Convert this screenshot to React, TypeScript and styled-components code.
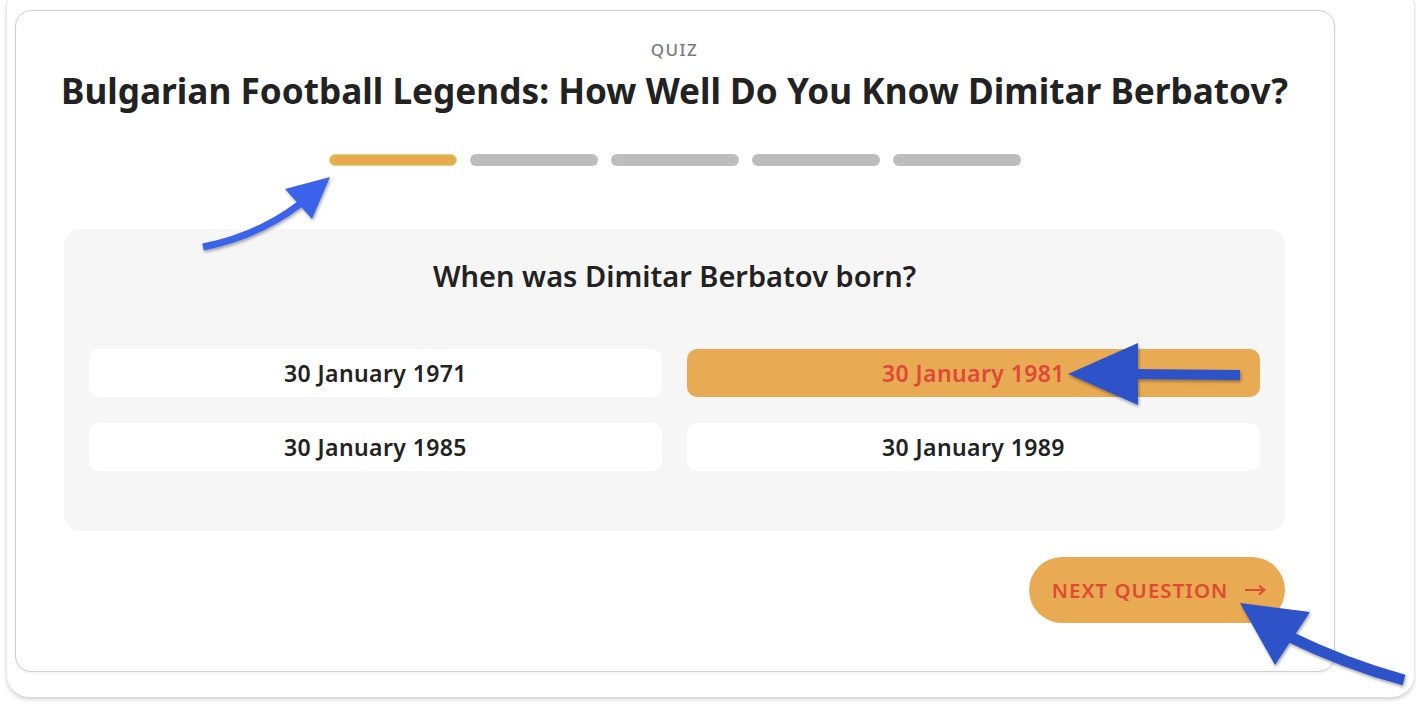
import React from 'react';
import styled, { createGlobalStyle } from 'styled-components';

const GlobalStyle = createGlobalStyle`
  html, body {
    margin: 0;
    padding: 0;
    background: #ffffff;
    overflow: hidden;
  }
  body {
    font-family: "Noto Sans", "Open Sans", sans-serif;
    color: #222222;
  }
`;

const options = [
  { label: '30 January 1971', selected: false },
  { label: '30 January 1981', selected: true },
  { label: '30 January 1985', selected: false },
  { label: '30 January 1989', selected: false },
];

const steps = [true, false, false, false, false];

function Annotations() {
  return (
    <Overlay width="1416" height="704" viewBox="0 0 1416 704">
      <defs>
        <filter id="shadow" x="-20%" y="-20%" width="140%" height="140%">
          <feDropShadow dx="1" dy="2" stdDeviation="1.5" floodColor="#000" floodOpacity="0.35" />
        </filter>
      </defs>
      <g filter="url(#shadow)">
        <path d="M203 247 Q258 236 300 204" fill="none" stroke="#3a62ea" strokeWidth="7" />
        <polygon points="330,177 285,189 312,219" fill="#3a62ea" />
      </g>
      <g filter="url(#shadow)">
        <path d="M1240 375 L1132 374" fill="none" stroke="#2f53c9" strokeWidth="10" />
        <polygon points="1068,374 1138,343 1138,405" fill="#2f53c9" />
      </g>
      <g filter="url(#shadow)">
        <path d="M1288 636 Q1345 664 1404 680" fill="none" stroke="#2f53c9" strokeWidth="11" />
        <polygon points="1240,603 1310,612 1275,665" fill="#2f53c9" />
      </g>
    </Overlay>
  );
}

function LongArrow() {
  return (
    <ArrowIcon width="22" height="12" viewBox="0 0 22 12">
      <path d="M1 6 H20" stroke="currentColor" strokeWidth="2" fill="none" />
      <path d="M15 1.5 L20.5 6 L15 10.5" stroke="currentColor" strokeWidth="2" fill="none" />
    </ArrowIcon>
  );
}

export default function App() {
  return (
    <>
      <GlobalStyle />
      <Page>
        <Backdrop>
          <Card>
            <Eyebrow>QUIZ</Eyebrow>
            <Title>Bulgarian Football Legends: How Well Do You Know Dimitar Berbatov?</Title>
            <Progress>
              {steps.map((active, i) => (
                <Step key={i} $active={active} />
              ))}
            </Progress>
            <QuestionBox>
              <Question>When was Dimitar Berbatov born?</Question>
              <Options>
                {options.map((o) => (
                  <Option key={o.label} $selected={o.selected}>
                    {o.label}
                  </Option>
                ))}
              </Options>
            </QuestionBox>
            <Footer>
              <NextButton>
                NEXT QUESTION
                <LongArrow />
              </NextButton>
            </Footer>
          </Card>
        </Backdrop>
        <Annotations />
      </Page>
    </>
  );
}

const Page = styled.div`
  position: relative;
  width: 1416px;
  height: 704px;
  overflow: hidden;
`;

const Backdrop = styled.div`
  margin: -14px 2px 0 7px;
  height: 711px;
  background: #ffffff;
  border-radius: 22px;
  box-shadow: 0 2px 5px rgba(0, 0, 0, 0.22);
  padding: 24px 0 0 8px;
  box-sizing: border-box;
`;

const Card = styled.div`
  width: 1320px;
  height: 662px;
  box-sizing: border-box;
  border: 1px solid #cfcfcf;
  border-radius: 16px;
  background: #ffffff;
  box-shadow: 0 1px 3px rgba(0, 0, 0, 0.08);
  padding: 29px 49px 0 48px;
  display: flex;
  flex-direction: column;
  align-items: center;
`;

const Eyebrow = styled.div`
  font-size: 17px;
  font-weight: 500;
  letter-spacing: 1.5px;
  color: #7a7a7a;
  line-height: 20px;
`;

const Title = styled.h1`
  margin: 8px 0 0;
  font-size: 35.2px;
  font-weight: 700;
  line-height: 44px;
  color: #222222;
  white-space: nowrap;
`;

const Progress = styled.div`
  display: flex;
  gap: 13px;
  margin-top: 42px;
`;

const Step = styled.div<{ $active: boolean }>`
  width: 128px;
  height: 12px;
  box-sizing: border-box;
  border-radius: 6px;
  background: ${(p) => (p.$active ? '#e8aa52' : '#bdbdbd')};
  border: ${(p) => (p.$active ? '1px solid #c9e37a' : 'none')};
`;

const QuestionBox = styled.div`
  align-self: stretch;
  margin-top: 63px;
  height: 302px;
  box-sizing: border-box;
  background: #f6f6f6;
  border-radius: 16px;
  padding: 28px 25px 0;
  display: flex;
  flex-direction: column;
  align-items: center;
`;

const Question = styled.h2`
  margin: 0;
  font-size: 29px;
  font-weight: 600;
  line-height: 38px;
  color: #222222;
`;

const Options = styled.div`
  align-self: stretch;
  margin-top: 54px;
  display: grid;
  grid-template-columns: 1fr 1fr;
  column-gap: 25px;
  row-gap: 26px;
`;

const Option = styled.div<{ $selected: boolean }>`
  height: 48px;
  border-radius: 10px;
  display: flex;
  align-items: center;
  justify-content: center;
  font-size: 23px;
  font-weight: 600;
  letter-spacing: 0.4px;
  color: ${(p) => (p.$selected ? '#e0493a' : '#222222')};
  background: ${(p) => (p.$selected ? '#e8aa52' : '#ffffff')};
`;

const Footer = styled.div`
  align-self: stretch;
  display: flex;
  justify-content: flex-end;
  margin-top: 26px;
`;

const NextButton = styled.button`
  width: 256px;
  height: 66px;
  border: none;
  border-radius: 33px;
  background: #e8aa52;
  color: #e04a33;
  font-family: inherit;
  font-size: 20.5px;
  font-weight: 600;
  letter-spacing: 1px;
  display: flex;
  align-items: center;
  justify-content: center;
  gap: 16px;
  padding: 0 0 0 4px;
`;

const ArrowIcon = styled.svg`
  display: block;
  flex: none;
`;

const Overlay = styled.svg`
  position: absolute;
  left: 0;
  top: 0;
  pointer-events: none;
`;
